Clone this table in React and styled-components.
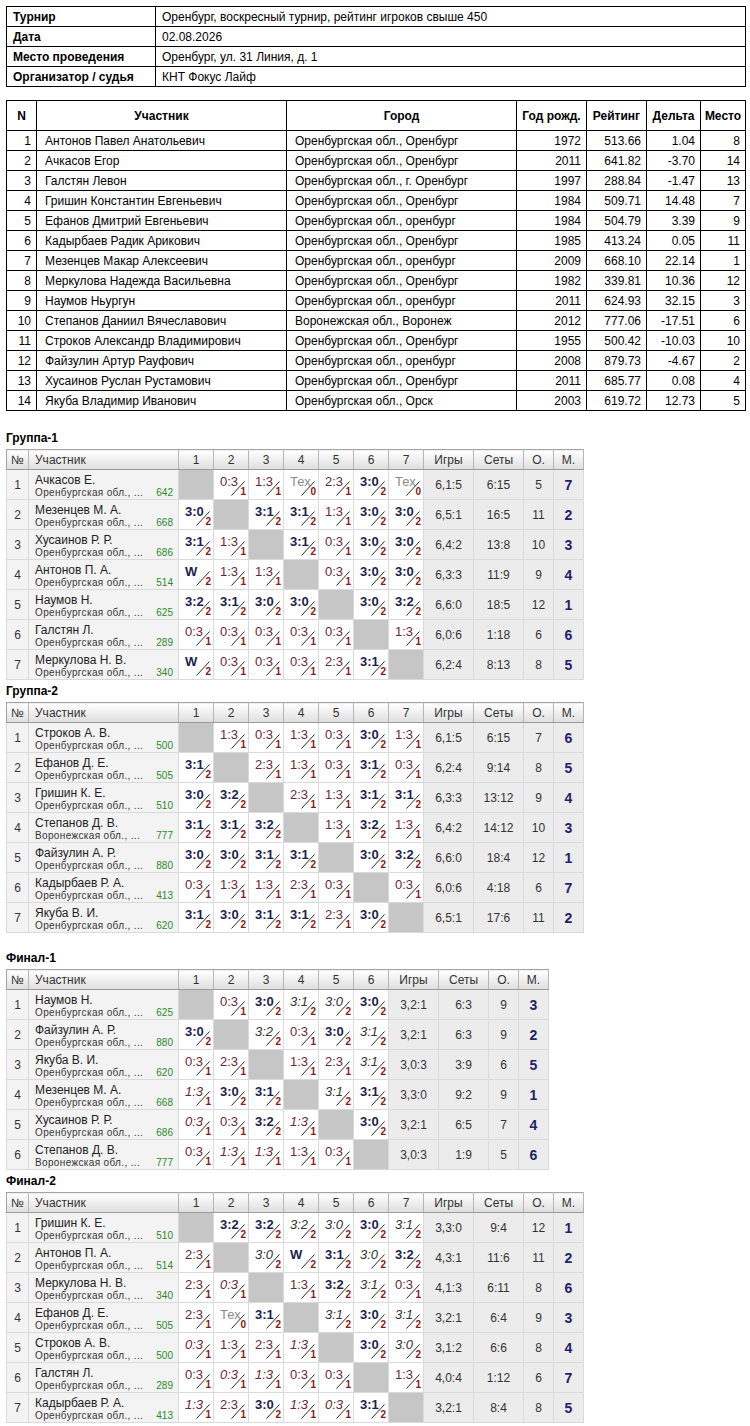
import React from 'react';
import styled, { createGlobalStyle } from 'styled-components';

const Global = createGlobalStyle`
  html, body { margin: 0; padding: 0; background: #fff; }
  body { font-family: "Liberation Sans", Arial, sans-serif; color: #000; }
  * { box-sizing: border-box; }
`;

const Page = styled.div`
  width: 750px;
  padding: 6px 5px 6px 6px;
`;

const InfoTable = styled.table`
  width: 739px;
  border-collapse: collapse;
  table-layout: fixed;
  font-size: 12px;
`;

const InfoRow = styled.tr`
  height: 20px;
`;

const InfoCell = styled.td`
  border: 1px solid #000;
  padding: 0 6px;
  font-weight: ${p => (p.$label ? 'bold' : 'normal')};
  white-space: nowrap;
`;

const Col = styled.col`
  width: ${p => p.$w}px;
`;

const PlayersTable = styled.table`
  width: 739px;
  margin-top: 13px;
  border-collapse: collapse;
  table-layout: fixed;
  font-size: 12px;
`;

const PHead = styled.th`
  border: 1px solid #000;
  height: 30px;
  font-weight: bold;
  text-align: center;
  padding: 0 2px;
  white-space: nowrap;
`;

const PRow = styled.tr`
  height: 20px;
`;

const PCell = styled.td`
  border: 1px solid #000;
  padding: ${p => (p.$right ? '0 5px 0 2px' : '0 8px')};
  text-align: ${p => (p.$right ? 'right' : 'left')};
  white-space: nowrap;
  overflow: hidden;
`;

const Section = styled.section`
  margin-top: ${p => p.$mt}px;
`;

const Title = styled.div`
  font-weight: bold;
  font-size: 12px;
  line-height: 14px;
  height: 14px;
  margin-bottom: 4px;
`;

const GTable = styled.table`
  border-collapse: collapse;
  table-layout: fixed;
  width: ${p => p.$w}px;
  border: 1px solid #a4a4a4;
  font-size: 12px;
  color: #333;
`;

const GHead = styled.th`
  height: 20px;
  padding: 0 ${p => (p.$left ? '6px' : '0')};
  background: linear-gradient(#ffffff, #dedede);
  border-right: 1px solid #b6b6b6;
  border-bottom: 1px solid #9c9c9c;
  font-weight: normal;
  font-size: 12px;
  color: #333;
  text-align: ${p => (p.$left ? 'left' : 'center')};
  white-space: nowrap;
`;

const GRow = styled.tr`
  height: 30px;
`;

const NumCell = styled.td`
  border: 1px solid #dadada;
  background: #f3f3f3;
  text-align: center;
  font-size: 12px;
  padding: 0;
`;

const NameCell = styled.td`
  border: 1px solid #dadada;
  background: #f3f3f3;
  padding: 3px 5px 0 6px;
  vertical-align: top;
`;

const NameLine = styled.div`
  font-size: 12px;
  line-height: 14px;
  color: #222;
  white-space: nowrap;
`;

const SubLine = styled.div`
  display: flex;
  justify-content: space-between;
  font-size: 10px;
  line-height: 12px;
  white-space: nowrap;
`;

const Region = styled.span`
  color: #333;
  letter-spacing: 0.35px;
`;

const Rating = styled.span`
  color: #2a8a2a;
`;

const ScoreCell = styled.td`
  border: 1px solid #dadada;
  background: ${p => (p.$self ? '#c6c6c6' : '#fff')};
  padding: 0;
  vertical-align: top;
`;

const MatchBox = styled.div`
  position: relative;
  height: 29px;
`;

const Score = styled.span`
  display: block;
  padding: 4px 0 0 6px;
  font-size: 13px;
  line-height: 15px;
  white-space: nowrap;
  font-weight: ${p => (p.$bold ? 'bold' : 'normal')};
  font-style: ${p => (p.$italic ? 'italic' : 'normal')};
  color: ${p => p.$color};
`;

const Slash = styled.svg`
  position: absolute;
  right: 3px;
  bottom: 3px;
`;

const Mark = styled.span`
  position: absolute;
  right: 2px;
  bottom: 2px;
  font-size: 10px;
  line-height: 10px;
  font-weight: bold;
  color: #8a1818;
`;

const StatCell = styled.td`
  border: 1px solid #dadada;
  background: #ececec;
  text-align: center;
  font-size: 12px;
  color: #333;
  padding: 0;
`;

const PlaceCell = styled(StatCell)`
  font-size: 14px;
  font-weight: bold;
  color: #22226a;
`;

const info = [
  ['Турнир', 'Оренбург, воскресный турнир, рейтинг игроков свыше 450'],
  ['Дата', '02.08.2026'],
  ['Место проведения', 'Оренбург, ул. 31 Линия, д. 1'],
  ['Организатор / судья', 'КНТ Фокус Лайф'],
];

const players = [
  [1, 'Антонов Павел Анатольевич', 'Оренбургская обл., Оренбург', 1972, '513.66', '1.04', 8],
  [2, 'Ачкасов Егор', 'Оренбургская обл., Оренбург', 2011, '641.82', '-3.70', 14],
  [3, 'Галстян Левон', 'Оренбургская обл., г. Оренбург', 1997, '288.84', '-1.47', 13],
  [4, 'Гришин Константин Евгеньевич', 'Оренбургская обл., Оренбург', 1984, '509.71', '14.48', 7],
  [5, 'Ефанов Дмитрий Евгеньевич', 'Оренбургская обл., оренбург', 1984, '504.79', '3.39', 9],
  [6, 'Кадырбаев Радик Арикович', 'Оренбургская обл., Оренбург', 1985, '413.24', '0.05', 11],
  [7, 'Мезенцев Макар Алексеевич', 'Оренбургская обл., оренбург', 2009, '668.10', '22.14', 1],
  [8, 'Меркулова Надежда Васильевна', 'Оренбургская обл., Оренбург', 1982, '339.81', '10.36', 12],
  [9, 'Наумов Ньургун', 'Оренбургская обл., оренбург', 2011, '624.93', '32.15', 3],
  [10, 'Степанов Даниил Вячеславович', 'Воронежская обл., Воронеж', 2012, '777.06', '-17.51', 6],
  [11, 'Строков Александр Владимирович', 'Оренбургская обл., Оренбург', 1955, '500.42', '-10.03', 10],
  [12, 'Файзулин Артур Рауфович', 'Оренбургская обл., оренбург', 2008, '879.73', '-4.67', 2],
  [13, 'Хусаинов Руслан Рустамович', 'Оренбургская обл., Оренбург', 2011, '685.77', '0.08', 4],
  [14, 'Якуба Владимир Иванович', 'Оренбургская обл., Орск', 2003, '619.72', '12.73', 5],
];

const O = 'Оренбургская обл., ...';
const V = 'Воронежская обл., ...';

const groups = [
  {
    title: 'Группа-1', mt: 20, rows: [
      ['Ачкасов Е.', O, 642, 'x 0:3 1:3 T 2:3 3:0b T', '6,1:5', '6:15', 5, 7],
      ['Мезенцев М. А.', O, 668, '3:0b x 3:1b 3:1b 1:3 3:0b 3:0b', '6,5:1', '16:5', 11, 2],
      ['Хусаинов Р. Р.', O, 686, '3:1b 1:3 x 3:1b 0:3 3:0b 3:0b', '6,4:2', '13:8', 10, 3],
      ['Антонов П. А.', O, 514, 'W 1:3 1:3 x 0:3 3:0b 3:0b', '6,3:3', '11:9', 9, 4],
      ['Наумов Н.', O, 625, '3:2b 3:1b 3:0b 3:0b x 3:0b 3:2b', '6,6:0', '18:5', 12, 1],
      ['Галстян Л.', O, 289, '0:3 0:3 0:3 0:3 0:3 x 1:3', '6,0:6', '1:18', 6, 6],
      ['Меркулова Н. В.', O, 340, 'W 0:3 0:3 0:3 2:3 3:1b x', '6,2:4', '8:13', 8, 5],
    ],
  },
  {
    title: 'Группа-2', mt: 4, rows: [
      ['Строков А. В.', O, 500, 'x 1:3 0:3 1:3 0:3 3:0b 1:3', '6,1:5', '6:15', 7, 6],
      ['Ефанов Д. Е.', O, 505, '3:1b x 2:3 1:3 0:3 3:1b 0:3', '6,2:4', '9:14', 8, 5],
      ['Гришин К. Е.', O, 510, '3:0b 3:2b x 2:3 1:3 3:1b 3:1b', '6,3:3', '13:12', 9, 4],
      ['Степанов Д. В.', V, 777, '3:1b 3:1b 3:2b x 1:3 3:2b 1:3', '6,4:2', '14:12', 10, 3],
      ['Файзулин А. Р.', O, 880, '3:0b 3:0b 3:1b 3:1b x 3:0b 3:2b', '6,6:0', '18:4', 12, 1],
      ['Кадырбаев Р. А.', O, 413, '0:3 1:3 1:3 2:3 0:3 x 0:3', '6,0:6', '4:18', 6, 7],
      ['Якуба В. И.', O, 620, '3:1b 3:0b 3:1b 3:1b 2:3 3:0b x', '6,5:1', '17:6', 11, 2],
    ],
  },
  {
    title: 'Финал-1', mt: 18, rows: [
      ['Наумов Н.', O, 625, 'x 0:3 3:0b 3:1i 3:0i 3:0b', '3,2:1', '6:3', 9, 3],
      ['Файзулин А. Р.', O, 880, '3:0b x 3:2i 0:3 3:0b 3:1i', '3,2:1', '6:3', 9, 2],
      ['Якуба В. И.', O, 620, '0:3 2:3 x 1:3 2:3 3:1i', '3,0:3', '3:9', 6, 5],
      ['Мезенцев М. А.', O, 668, '1:3i 3:0b 3:1b x 3:1i 3:1b', '3,3:0', '9:2', 9, 1],
      ['Хусаинов Р. Р.', O, 686, '0:3i 0:3 3:2b 1:3i x 3:0b', '3,2:1', '6:5', 7, 4],
      ['Степанов Д. В.', V, 777, '0:3 1:3i 1:3i 1:3 0:3 x', '3,0:3', '1:9', 5, 6],
    ],
  },
  {
    title: 'Финал-2', mt: 4, rows: [
      ['Гришин К. Е.', O, 510, 'x 3:2b 3:2b 3:2i 3:0i 3:0b 3:1i', '3,3:0', '9:4', 12, 1],
      ['Антонов П. А.', O, 514, '2:3 x 3:0i W 3:1b 3:0i 3:2b', '4,3:1', '11:6', 11, 2],
      ['Меркулова Н. В.', O, 340, '2:3 0:3i x 1:3 3:2b 3:1i 0:3', '4,1:3', '6:11', 8, 6],
      ['Ефанов Д. Е.', O, 505, '2:3 T 3:1b x 3:1i 3:0b 3:1i', '3,2:1', '6:4', 9, 3],
      ['Строков А. В.', O, 500, '0:3i 1:3 2:3 1:3i x 3:0b 3:0i', '3,1:2', '6:6', 8, 4],
      ['Галстян Л.', O, 289, '0:3 0:3i 1:3i 0:3 0:3 x 1:3', '4,0:4', '1:12', 6, 7],
      ['Кадырбаев Р. А.', O, 413, '1:3i 2:3 3:0b 1:3i 0:3i 3:1b x', '3,2:1', '8:4', 8, 5],
    ],
  },
];

function Match({ code }) {
  if (code === 'x') {
    return <ScoreCell $self />;
  }
  let text = code;
  let bold = false;
  let italic = false;
  let mark = 1;
  let color = '#6a2838';
  if (code === 'T') {
    text = 'Тех';
    mark = 0;
    color = '#8a8a8a';
  } else if (code === 'W') {
    text = 'W';
    bold = true;
    mark = 2;
    color = '#1e1e4e';
  } else {
    if (code.endsWith('b')) { bold = true; text = code.slice(0, -1); }
    if (code.endsWith('i')) { italic = true; text = code.slice(0, -1); }
    const [a, b] = text.split(':').map(Number);
    if (a > b) {
      mark = 2;
      color = bold ? '#1e1e4e' : '#333';
    }
  }
  return (
    <ScoreCell>
      <MatchBox>
        <Score $bold={bold} $italic={italic} $color={color}>{text}</Score>
        <Slash width="14" height="15" viewBox="0 0 14 15">
          <line x1="0.5" y1="14.5" x2="13.5" y2="0.5" stroke="#2a2a2a" strokeWidth="1" />
        </Slash>
        <Mark>{mark}</Mark>
      </MatchBox>
    </ScoreCell>
  );
}

function Group({ title, mt, rows }) {
  const n = rows.length;
  const width = 22 + 150 + n * 35 + 50 + 50 + 30 + 30;
  return (
    <Section $mt={mt}>
      <Title>{title}</Title>
      <GTable $w={width}>
        <colgroup>
          <Col $w={22} />
          <Col $w={150} />
          {rows.map((_, i) => <Col key={i} $w={35} />)}
          <Col $w={50} />
          <Col $w={50} />
          <Col $w={30} />
          <Col $w={30} />
        </colgroup>
        <thead>
          <tr>
            <GHead>№</GHead>
            <GHead $left>Участник</GHead>
            {rows.map((_, i) => <GHead key={i}>{i + 1}</GHead>)}
            <GHead>Игры</GHead>
            <GHead>Сеты</GHead>
            <GHead>О.</GHead>
            <GHead>М.</GHead>
          </tr>
        </thead>
        <tbody>
          {rows.map((r, i) => (
            <GRow key={i}>
              <NumCell>{i + 1}</NumCell>
              <NameCell>
                <NameLine>{r[0]}</NameLine>
                <SubLine>
                  <Region>{r[1]}</Region>
                  <Rating>{r[2]}</Rating>
                </SubLine>
              </NameCell>
              {r[3].split(' ').map((c, j) => <Match key={j} code={c} />)}
              <StatCell>{r[4]}</StatCell>
              <StatCell>{r[5]}</StatCell>
              <StatCell>{r[6]}</StatCell>
              <PlaceCell>{r[7]}</PlaceCell>
            </GRow>
          ))}
        </tbody>
      </GTable>
    </Section>
  );
}

export default function App() {
  return (
    <Page>
      <Global />
      <InfoTable>
        <colgroup>
          <Col $w={149} />
          <Col $w={590} />
        </colgroup>
        <tbody>
          {info.map(([k, v]) => (
            <InfoRow key={k}>
              <InfoCell $label>{k}</InfoCell>
              <InfoCell>{v}</InfoCell>
            </InfoRow>
          ))}
        </tbody>
      </InfoTable>
      <PlayersTable>
        <colgroup>
          <Col $w={30} />
          <Col $w={250} />
          <Col $w={230} />
          <Col $w={70} />
          <Col $w={60} />
          <Col $w={54} />
          <Col $w={45} />
        </colgroup>
        <thead>
          <tr>
            <PHead>N</PHead>
            <PHead>Участник</PHead>
            <PHead>Город</PHead>
            <PHead>Год рожд.</PHead>
            <PHead>Рейтинг</PHead>
            <PHead>Дельта</PHead>
            <PHead>Место</PHead>
          </tr>
        </thead>
        <tbody>
          {players.map(p => (
            <PRow key={p[0]}>
              <PCell $right>{p[0]}</PCell>
              <PCell>{p[1]}</PCell>
              <PCell>{p[2]}</PCell>
              <PCell $right>{p[3]}</PCell>
              <PCell $right>{p[4]}</PCell>
              <PCell $right>{p[5]}</PCell>
              <PCell $right>{p[6]}</PCell>
            </PRow>
          ))}
        </tbody>
      </PlayersTable>
      {groups.map(g => <Group key={g.title} {...g} />)}
    </Page>
  );
}
